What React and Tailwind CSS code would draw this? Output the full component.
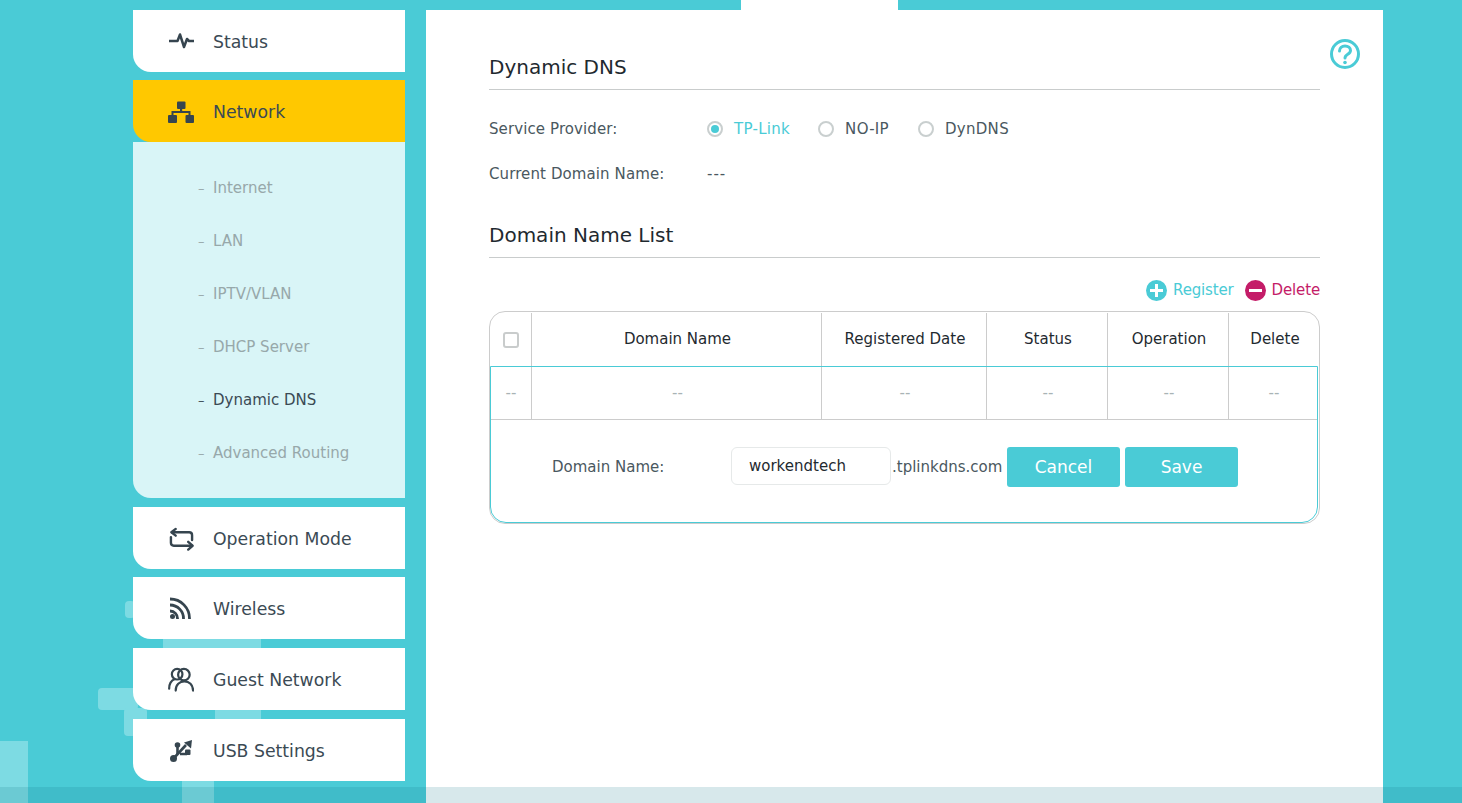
const font = "font-['DejaVu_Sans',sans-serif]";

const StatusIcon = () => (
    <svg viewBox="0 0 25 16" className="h-[16px] w-[25px]" fill="none" stroke="#36454f" strokeWidth="2.5" strokeLinejoin="round">
        <path d="M0 8h8.500L11 1.500 15 14l3-8 2 2h5" />
    </svg>
);

const NetworkIcon = () => (
    <svg viewBox="0 0 26 23" className="h-[23px] w-[26px]" fill="#36454f">
        <rect x="9" y="1.500" width="8.500" height="7.500" rx="1" />
        <rect x="0" y="15" width="9" height="8" rx="1" />
        <rect x="17.500" y="15" width="8.500" height="8" rx="1" />
        <path d="M12 9h2.200v2h8.300v4h-2v-2h-15v2h-2v-4H12z" />
    </svg>
);

const ModeIcon = () => (
    <svg viewBox="0 0 26 24" className="ml-[1px] mt-[2px] h-[24px] w-[26px]" fill="none" stroke="#36454f" strokeWidth="2.500" strokeLinecap="round" strokeLinejoin="round">
        <path d="M3 5h18a3 3 0 0 1 3 3v5" />
        <path d="M7 1.500 2.500 5 7 8.500" />
        <path d="M2 10v6a3 3 0 0 0 3 3h19" />
        <path d="M20 15l4.500 4-4.500 4" />
    </svg>
);

const WirelessIcon = () => (
    <svg viewBox="0 0 22 22" className="h-[22px] w-[22px]" fill="none" stroke="#36454f" strokeWidth="2.800">
        <path d="M0 2a19.500 19.500 0 0 1 19.500 20" />
        <path d="M0 8a13.500 13.500 0 0 1 13.500 14" />
        <path d="M0 14a7.500 7.500 0 0 1 7.500 8" />
        <circle cx="2.500" cy="19.500" r="2.500" fill="#36454f" stroke="none" />
    </svg>
);

const GuestIcon = () => (
    <svg viewBox="0 0 27 25" className="h-[25px] w-[27px]" fill="none" stroke="#36454f" strokeWidth="2.300" strokeLinecap="round">
        <circle cx="9.500" cy="7" r="5.500" />
        <circle cx="16.500" cy="7.500" r="6" />
        <path d="M1.200 22C1.200 17 3.500 13.500 7 12" />
        <path d="M8 24c0-6 4-9.500 9-9.500s9 3.500 9 9.500" />
    </svg>
);

const UsbIcon = () => (
    <svg viewBox="0 0 22 22" className="mt-[2px] h-[22px] w-[22px]" fill="#36454f">
        <circle cx="3.500" cy="18.500" r="3.500" />
        <path d="M3.500 18.500 16 5" fill="none" stroke="#36454f" strokeWidth="2.600" />
        <path d="M22 0l-1 8.500-7-6z" />
        <path d="M7.500 14V6.500M10 14h7" fill="none" stroke="#36454f" strokeWidth="2.600" />
        <circle cx="7.500" cy="5" r="2.800" />
        <rect x="15" y="9.500" width="5.500" height="5.500" rx="1" />
    </svg>
);

const HelpIcon = () => (
    <svg viewBox="0 0 32 32" className="h-[32px] w-[32px]" fill="none" stroke="#4acbd6" strokeWidth="3" strokeLinecap="round">
        <circle cx="16" cy="16" r="13.500" />
        <path d="M10.500 13c0-3.200 2.400-5 5.500-5s5.500 1.800 5.500 4.500c0 4-5.500 3.500-5.500 7.500" />
        <circle cx="16" cy="24.500" r="1.800" fill="#4acbd6" stroke="none" />
    </svg>
);

const MenuItem = ({ icon, label, active, className }) => (
    <div className={`flex h-[62px] items-center rounded-bl-[18px] pl-[35px] ${active ? "bg-[#ffc800]" : "bg-white"} ${className}`}>
        <div className="flex w-[26px] justify-center">{icon}</div>
        <span className="ml-[19px] pt-[4px] text-[17.300px] text-[#3b4a54]">{label}</span>
    </div>
);

const subItems = ["Internet", "LAN", "IPTV/VLAN", "DHCP Server", "Dynamic DNS", "Advanced Routing"];

const Radio = ({ label, checked, className }) => (
    <div className={`flex items-center ${className}`}>
        <span className="-mt-[2px] flex h-4 w-4 items-center justify-center rounded-full border-2 border-[#c9cfcf] bg-white">
            {checked && <span className="h-2 w-2 rounded-full bg-[#4acbd6]" />}
        </span>
        <span className={`ml-[11px] tracking-[0.3px] ${checked ? "text-[#4acbd6]" : "text-[#4a5860]"}`}>{label}</span>
    </div>
);

const headColumns = ["w-[42px]", "w-[290px]", "w-[165px]", "w-[121px]", "w-[121px]", "flex-1"];
const rowColumns = ["w-[41px]", "w-[290px]", "w-[165px]", "w-[121px]", "w-[121px]", "flex-1"];
const headers = ["Domain Name", "Registered Date", "Status", "Operation", "Delete"];

const App = () => (
    <div className={`relative h-[803px] w-full overflow-hidden bg-[#4acbd6] ${font}`}>
        {/* background squares */}
        <div className="absolute left-[125px] top-[601px] h-[17px] w-[10px] rounded-sm bg-[#7ddbe3]" />
        <div className="absolute left-[163px] top-[635px] h-[14px] w-[98px] bg-[#7ddbe3]" />
        <div className="absolute left-[98px] top-[688px] h-[22px] w-[40px] rounded-sm bg-[#7ddbe3]" />
        <div className="absolute left-[124px] top-[708px] h-[28px] w-[23px] rounded-sm bg-[#7ddbe3]" />
        <div className="absolute left-[215px] top-[708px] h-[14px] w-[46px] bg-[#7ddbe3]" />
        <div className="absolute left-0 top-[741px] h-[62px] w-[28px] bg-[#7ddbe3]" />
        <div className="absolute left-[182px] top-[775px] h-[28px] w-[32px] bg-[#7ddbe3]" />

        <div className="absolute left-[741px] top-0 h-[10px] w-[157px] bg-white" />

        <div className="relative flex pl-[133px] pt-[10px]">
            <aside className="w-[272px]">
                <MenuItem icon={<StatusIcon />} label="Status" />
                <MenuItem icon={<NetworkIcon />} label="Network" active className="mt-2" />
                <div className="h-[356px] rounded-bl-[18px] bg-[#d9f5f7] pl-[65px] pt-[20px] text-[15px]">
                    {subItems.map((item) => (
                        <div key={item} className={`flex h-[53px] items-center ${item === "Dynamic DNS" ? "text-[#3b4a54]" : "text-[#97a8aa]"}`}>
                            <span className="w-[15px] text-[13px]">–</span>
                            {item}
                        </div>
                    ))}
                </div>
                <MenuItem icon={<ModeIcon />} label="Operation Mode" className="mt-[9px]" />
                <MenuItem icon={<WirelessIcon />} label="Wireless" className="mt-2" />
                <MenuItem icon={<GuestIcon />} label="Guest Network" className="mt-[9px]" />
                <MenuItem icon={<UsbIcon />} label="USB Settings" className="mt-[9px]" />
            </aside>

            <main className="relative ml-[21px] h-[793px] w-[957px] bg-white px-[63px] text-[15px] text-[#4a5860]">
                <div className="absolute right-[22px] top-[28px]"><HelpIcon /></div>

                <h2 className="flex h-[80px] items-end border-b border-[#c9cccc] pb-[7px] text-[20px] text-[#1f2a30]">Dynamic DNS</h2>

                <div className="mt-[17px] flex h-[45px] items-center tracking-[0.1px]">
                    <span className="w-[218px]">Service Provider:</span>
                    <Radio label="TP-Link" checked />
                    <Radio label="NO-IP" className="ml-[28px]" />
                    <Radio label="DynDNS" className="ml-[29px]" />
                </div>
                <div className="flex h-[45px] items-center tracking-[0.1px]">
                    <span className="w-[218px]">Current Domain Name:</span>
                    <span className="tracking-[1px]">---</span>
                </div>

                <h2 className="mt-[17px] flex h-[44px] items-end border-b border-[#c9cccc] pb-[7px] text-[20px] text-[#1f2a30]">Domain Name List</h2>

                <div className="mt-[20px] flex h-[24px] items-center justify-end tracking-[-0.15px]">
                    <span className="flex h-[21px] w-[21px] items-center justify-center rounded-full bg-[#4acbd6]">
                        <span className="relative h-[3px] w-[13px] bg-white before:absolute before:left-[5px] before:top-[-5px] before:h-[13px] before:w-[3px] before:bg-white" />
                    </span>
                    <span className="ml-[6px] text-[#4acbd6]">Register</span>
                    <span className="ml-[11px] flex h-[21px] w-[21px] items-center justify-center rounded-full bg-[#c41c68]">
                        <span className="h-[3px] w-[13px] bg-white" />
                    </span>
                    <span className="ml-[6px] text-[#c41c68]">Delete</span>
                </div>

                <div className="mt-[9px] h-[213px] rounded-2xl border border-[#cccccc]">
                    <div className="flex h-[54px] pt-[1px] text-[#1f2a30]">
                        <div className={`${headColumns[0]} flex items-center justify-center border-r border-[#cccccc]`}>
                            <span className="h-4 w-4 rounded-[3px] border-2 border-[#c9cccc]" />
                        </div>
                        {headers.map((header, i) => (
                            <div key={header} className={`${headColumns[i + 1]} flex items-center justify-center pl-[2px] ${i < 4 ? "border-r border-[#cccccc]" : ""}`}>
                                {header}
                            </div>
                        ))}
                    </div>
                    <div className="h-[157px] w-[828px] rounded-b-2xl border border-[#4acbd6]">
                        <div className="flex h-[53px] border-b border-[#cccccc] text-[#a9b3b5]">
                            {rowColumns.map((col, i) => (
                                <div key={i} className={`${col} flex items-center justify-center ${i > 0 ? "pl-[2px]" : ""} ${i < 5 ? "border-r border-[#cccccc]" : ""}`}>--</div>
                            ))}
                        </div>
                        <div className="flex items-start pl-[60px] pt-[27px]">
                            <span className="flex h-[40px] w-[180px] items-center pl-[1px]">Domain Name:</span>
                            <div className="flex h-[38px] w-[160px] items-center rounded-md border border-[#e6e9e9] pl-[17px] text-[#1f2a30]">workendtech</div>
                            <span className="ml-[1px] flex h-[40px] w-[115px] items-center">.tplinkdns.com</span>
                            <button className="h-[40px] w-[113px] rounded-[3px] bg-[#4acbd6] pt-[2px] text-[17px] text-white">Cancel</button>
                            <button className="ml-[5px] h-[40px] w-[113px] rounded-[3px] bg-[#4acbd6] pt-[2px] text-[17px] text-white">Save</button>
                        </div>
                    </div>
                </div>
            </main>
        </div>

        {/* bottom shade */}
        <div className="absolute bottom-0 left-0 h-[16px] w-full bg-[#14788a]/[0.17]" />
    </div>
);

export default App;
